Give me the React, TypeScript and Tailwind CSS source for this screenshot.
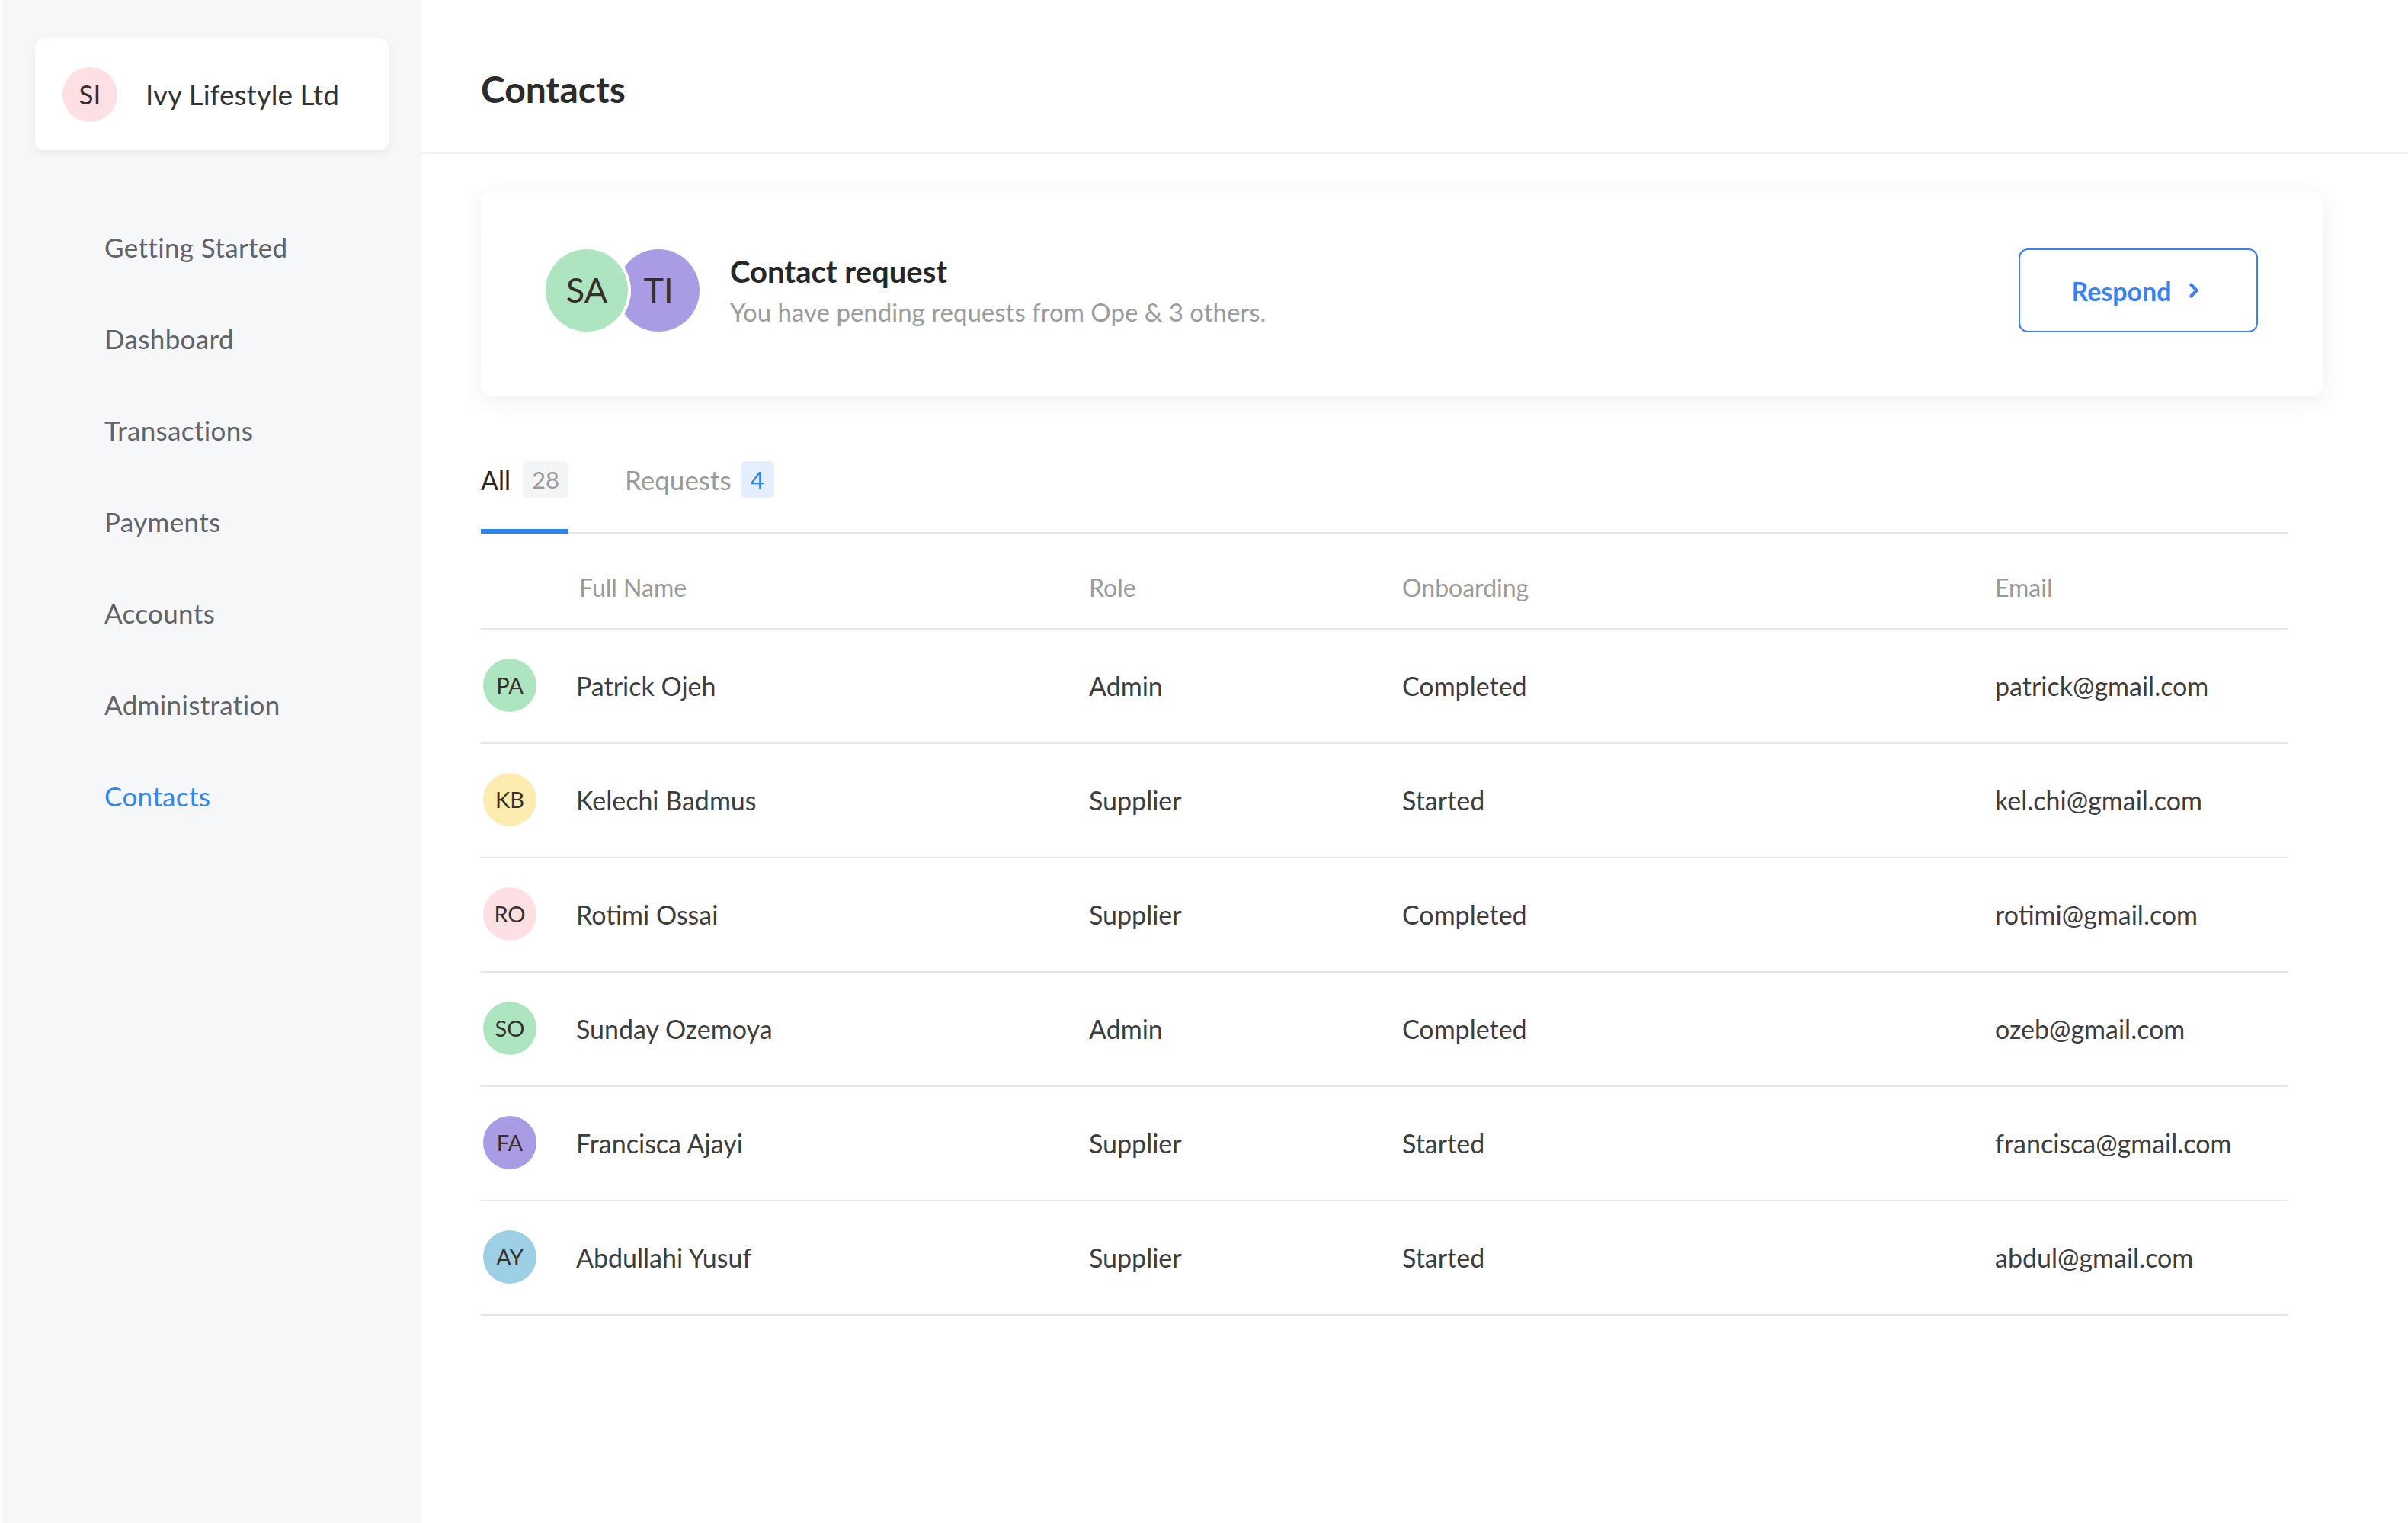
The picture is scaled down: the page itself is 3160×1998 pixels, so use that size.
import { ChevronRight } from "lucide-react";

const NAV = [
  "Getting Started",
  "Dashboard",
  "Transactions",
  "Payments",
  "Accounts",
  "Administration",
  "Contacts",
];

const CONTACTS = [
  { initials: "PA", name: "Patrick Ojeh", role: "Admin", onboarding: "Completed", email: "patrick@gmail.com", tone: "bg-[#ade5c0]" },
  { initials: "KB", name: "Kelechi Badmus", role: "Supplier", onboarding: "Started", email: "kel.chi@gmail.com", tone: "bg-[#fcecb0]" },
  { initials: "RO", name: "Rotimi Ossai", role: "Supplier", onboarding: "Completed", email: "rotimi@gmail.com", tone: "bg-[#fde0e4]" },
  { initials: "SO", name: "Sunday Ozemoya", role: "Admin", onboarding: "Completed", email: "ozeb@gmail.com", tone: "bg-[#ade5c0]" },
  { initials: "FA", name: "Francisca Ajayi", role: "Supplier", onboarding: "Started", email: "francisca@gmail.com", tone: "bg-[#a99be4]" },
  { initials: "AY", name: "Abdullahi Yusuf", role: "Supplier", onboarding: "Started", email: "abdul@gmail.com", tone: "bg-[#9dcfe5]" },
];

const COLS = "grid grid-cols-[125px_673px_411px_778px_1fr]";

function Sidebar() {
  return (
    <aside className="flex w-[554px] shrink-0 flex-col border-l-2 border-white bg-[#f6f7f9] pt-[50px]">
      <div className="ml-[44px] flex h-[147px] w-[464px] items-center rounded-[12px] bg-white pl-[36px] shadow-[0_4px_14px_rgba(17,24,39,0.06)]">
        <span className="flex h-[72px] w-[72px] items-center justify-center rounded-full bg-[#fde0e4] text-[35px] text-[#3a2e2a]">
          SI
        </span>
        <span className="ml-[37px] text-[37px] text-[#333333]">Ivy Lifestyle Ltd</span>
      </div>

      <nav className="mt-[67px] flex flex-col">
        {NAV.map((item) => (
          <a
            key={item}
            className={`flex h-[120px] items-center pl-[135px] text-[35px] tracking-[0.01em] ${
              item === "Contacts" ? "text-[#2f86eb]" : "text-[#616368]"
            }`}
          >
            {item}
          </a>
        ))}
      </nav>
    </aside>
  );
}

function RequestCard() {
  return (
    <section className="mt-[50px] flex h-[268px] items-center justify-between rounded-[14px] bg-white pb-[10px] pl-[85px] pr-[86px] shadow-[0_6px_30px_rgba(17,24,39,0.07)]">
      <div className="flex items-center">
        <div className="flex">
          <span className="relative z-10 flex h-[108px] w-[108px] items-center justify-center rounded-full bg-[#ade5c0] text-[45px] text-[#3a2e2a] ring-4 ring-white">
            SA
          </span>
          <span className="-ml-[14px] flex h-[108px] w-[108px] items-center justify-center rounded-full bg-[#a99be4] text-[45px] text-[#3a2e2a]">
            TI
          </span>
        </div>
        <div className="ml-[40px] flex flex-col">
          <h2 className="text-[40px] font-bold leading-[50px] text-[#262626]">Contact request</h2>
          <p className="mt-[6px] text-[33px] leading-[44px] text-[#9b9b9b]">
            You have pending requests from Ope &amp; 3 others.
          </p>
        </div>
      </div>
      <button className="flex h-[110px] w-[314px] items-center justify-center gap-[14px] rounded-[12px] border-2 border-[#3b82f0] text-[34px] font-bold text-[#3b82f0]">
        Respond
        <ChevronRight size={30} strokeWidth={3.2} />
      </button>
    </section>
  );
}

function Tabs() {
  return (
    <div className="mt-[86px] flex items-end gap-[74px] border-b-2 border-[#e6e6e6]">
      <div className="flex flex-col">
        <div className="flex h-[48px] items-center gap-[16px] pb-[2px]">
          <span className="text-[34px] text-[#262626]">All</span>
          <span className="flex h-[48px] w-[60px] items-center justify-center rounded-[6px] bg-[#f4f5f7] text-[31px] text-[#9a9a9a]">
            28
          </span>
        </div>
        <div className="-mb-[2px] mt-[40px] h-[6px] bg-[#2a86ee]" />
      </div>
      <div className="flex flex-col">
        <div className="flex h-[48px] items-center gap-[12px] pb-[2px]">
          <span className="text-[35px] text-[#9a9a9a]">Requests</span>
          <span className="flex h-[48px] w-[44px] items-center justify-center rounded-[6px] bg-[#e4eefd] text-[31px] text-[#2a86ee]">
            4
          </span>
        </div>
        <div className="-mb-[2px] mt-[40px] h-[6px]" />
      </div>
    </div>
  );
}

function ContactsTable() {
  return (
    <div>
      <div className={`${COLS} border-b-2 border-[#e6e6e6] pb-[34px] pt-[52px] text-[32px] leading-[38px] text-[#9a9a9a]`}>
        <span />
        <span className="pl-[4px]">Full Name</span>
        <span>Role</span>
        <span>Onboarding</span>
        <span>Email</span>
      </div>
      {CONTACTS.map((c) => (
        <div
          key={c.email}
          className={`${COLS} h-[150px] items-center border-b-2 border-[#e6e6e6] pb-[2px] text-[34px] text-[#3d3d3d]`}
        >
          <span
            className={`ml-[3px] flex h-[70px] w-[70px] items-center justify-center rounded-full text-[29px] text-[#3a2e2a] ${c.tone}`}
          >
            {c.initials}
          </span>
          <span>{c.name}</span>
          <span>{c.role}</span>
          <span>{c.onboarding}</span>
          <span>{c.email}</span>
        </div>
      ))}
    </div>
  );
}

export default function App() {
  return (
    <div className="flex min-h-[1998px] bg-white font-['Lato',sans-serif]">
      <Sidebar />
      <main className="flex flex-1 flex-col">
        <header className="flex h-[202px] items-center border-b-2 border-[#f1f1f1] pl-[77px] pt-[34px]">
          <h1 className="text-[48px] font-bold text-[#2b2b2b]">Contacts</h1>
        </header>
        <div className="pl-[77px] pr-[111px]">
          <RequestCard />
          <div className="mr-[47px]">
            <Tabs />
            <ContactsTable />
          </div>
        </div>
      </main>
    </div>
  );
}
